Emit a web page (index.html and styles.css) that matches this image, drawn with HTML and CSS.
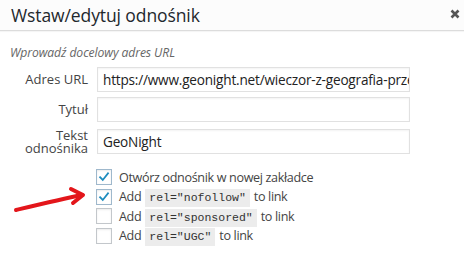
FILE: index.html
```html
<!DOCTYPE html>
<html lang="pl">
<head>
<meta charset="utf-8">
<link rel="stylesheet" href="styles.css">
</head>
<body>
<div class="dialog">
  <div class="header">
    <span class="title">Wstaw/edytuj odnośnik</span>
    <svg class="close" viewBox="0 0 10 10" width="10" height="10"><path d="M1.5 1.5 L8.5 8.5 M8.5 1.5 L1.5 8.5" /></svg>
  </div>
  <div class="content">
    <p class="hint">Wprowadź docelowy adres URL</p>
    <div class="form">
      <label class="lbl">Adres URL</label>
      <div class="field">https://www.geonight.net/wieczor-z-geografia-przez-swiat</div>
      <label class="lbl">Tytuł</label>
      <div class="field"></div>
      <label class="lbl two">Tekst<br>odnośnika</label>
      <div class="field last">GeoNight</div>
    </div>
    <div class="opts">
      <div class="opt"><span class="cb checked"><svg viewBox="0 0 16 16"><path d="M3.5 8.2 L6.6 11.4 L12.6 3.8" /></svg></span><span>Otwórz odnośnik w nowej zakładce</span></div>
      <div class="opt"><span class="cb checked"><svg viewBox="0 0 16 16"><path d="M3.5 8.2 L6.6 11.4 L12.6 3.8" /></svg></span><span>Add <code>rel="nofollow"</code> to link</span></div>
      <div class="opt"><span class="cb"></span><span>Add <code>rel="sponsored"</code> to link</span></div>
      <div class="opt"><span class="cb"></span><span>Add <code>rel="UGC"</code> to link</span></div>
    </div>
  </div>
  <svg class="arrow" viewBox="0 0 90 30" width="90" height="30">
    <path d="M14 27 C 35 22, 60 16, 80 12" />
    <path d="M69 6 L81 12 L71 20" />
  </svg>
</div>
</body>
</html>
```
FILE: styles.css
```css
* { box-sizing: border-box; }
html, body { margin: 0; padding: 0; background: #fff; }
body {
  width: 464px;
  height: 254px;
  overflow: hidden;
  font-family: "Open Sans", "Noto Sans", sans-serif;
  color: #333;
}
.dialog { position: relative; width: 464px; height: 254px; }
.header {
  height: 31px;
  display: flex;
  align-items: center;
  justify-content: space-between;
  padding: 0 4px 1px 11px;
  border-bottom: 1px solid #dcdcdc;
  box-shadow: 0 1px 1px rgba(0,0,0,0.04);
  background: #fcfcfc;
}
.title { font-size: 17.5px; color: #23282d; letter-spacing: -0.1px; }
.close { margin-top: -2px; }
.close path { stroke: #555; stroke-width: 2.6; fill: none; }
.content { padding: 0 10px; }
.hint {
  margin: 0;
  padding-top: 13px;
  height: 36px;
  font-size: 12.2px;
  font-style: italic;
  color: #666;
  letter-spacing: -0.1px;
}
.form {
  display: grid;
  grid-template-columns: 78px 313px;
  column-gap: 9px;
  row-gap: 5px;
  align-items: center;
}
.lbl {
  text-align: right;
  font-size: 13px;
  color: #444;
  line-height: 15px;
}
.lbl.two { line-height: 13px; margin-top: 2px; }
.field {
  height: 25px;
  border: 1px solid #e1e1e1;
  box-shadow: inset 0 1px 2px rgba(0,0,0,0.05);
  font-size: 13.6px;
  line-height: 23px;
  padding: 0 5px;
  white-space: nowrap;
  overflow: hidden;
  color: #222;
  letter-spacing: -0.2px;
}
.field.last { margin-top: 1px; }
.opts { padding: 14px 0 0 86px; display: flex; flex-direction: column; gap: 3.5px; }
.opt {
  display: flex;
  align-items: center;
  gap: 7px;
  height: 16px;
  font-size: 12.6px;
  color: #444;
  white-space: nowrap;
  letter-spacing: -0.35px;
}
.cb {
  width: 16px;
  height: 16px;
  border: 1px solid #c3c7cb;
  background: #fff;
  box-shadow: inset 0 1px 2px rgba(0,0,0,0.08);
  flex: none;
  display: flex;
}
.cb.checked { border-color: #9fb8cc; }
.cb svg { width: 14px; height: 14px; }
.cb svg path { fill: none; stroke: #1e8cbe; stroke-width: 2; stroke-linecap: square; }
code {
  font-family: "Liberation Mono", "DejaVu Sans Mono", monospace;
  font-size: 11.5px;
  letter-spacing: 0;
  background: #ececec;
  padding: 2px 4px 3px;
  margin: 0 1px;
  color: #333;
}
.arrow { position: absolute; left: 2px; top: 183px; }
.arrow path { fill: none; stroke: #e3161b; stroke-width: 4; stroke-linecap: round; stroke-linejoin: round; }
```
